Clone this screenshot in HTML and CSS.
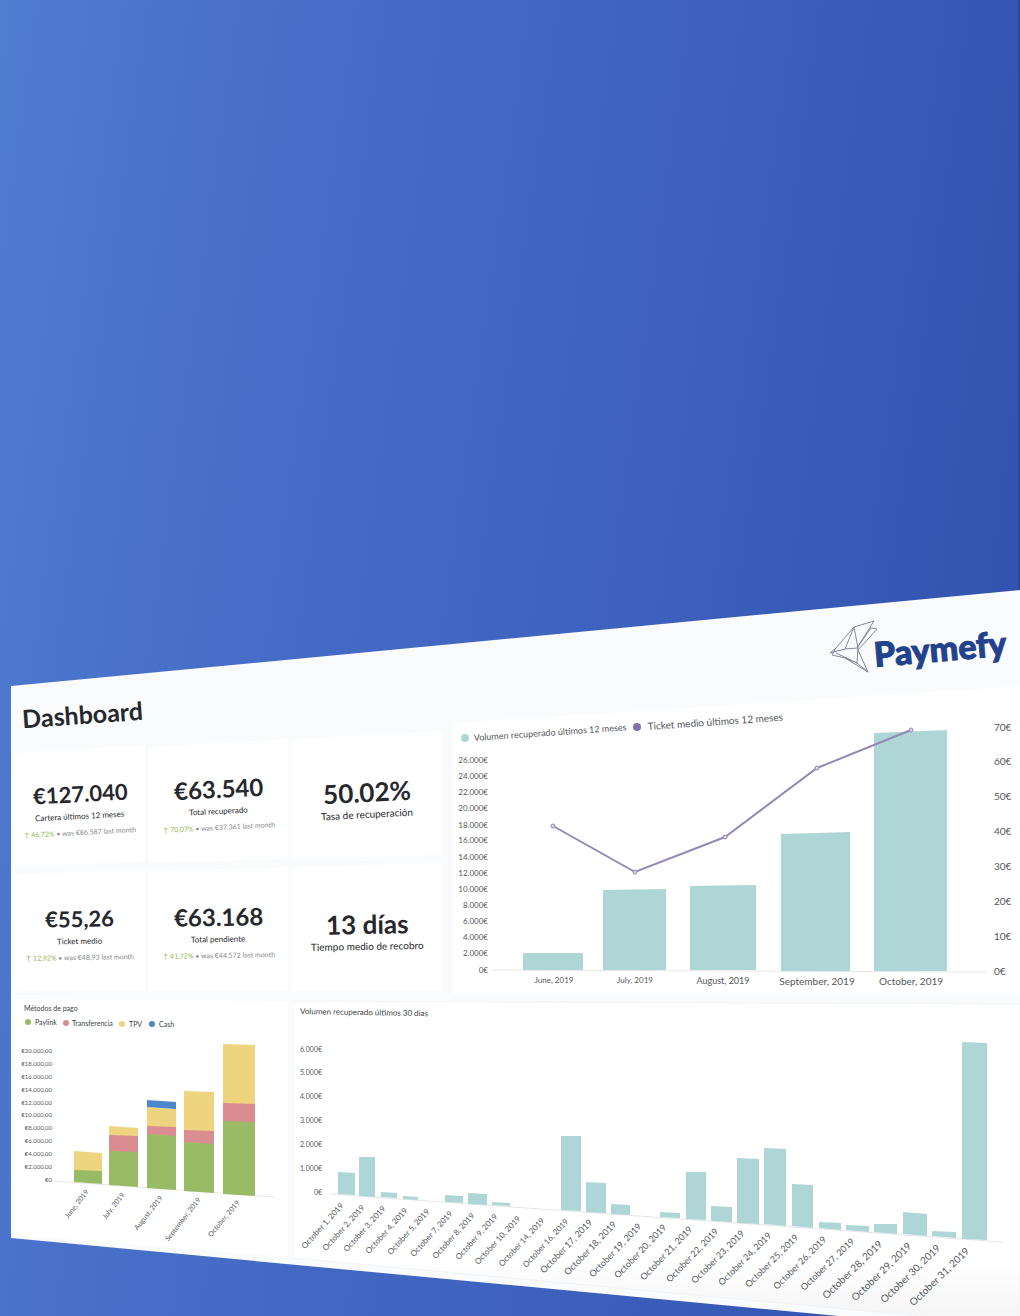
FILE: index.html
```html
<!DOCTYPE html>
<html lang="es">
<head>
<meta charset="utf-8">
<meta name="viewport" content="width=device-width, initial-scale=1">
<title>Paymefy Dashboard</title>
<link rel="stylesheet" href="styles.css">
</head>
<body>
<main class="hero">
  <section class="board">
    <header class="board-header">
      <svg class="logo" viewBox="826 612 188 68" role="img" aria-label="Paymefy">
        <g class="logo-bird">
          <path d="M874 621 L854 627 L836 648 L830 653 L845 649 L858 648 L854 627 L845 649"/>
          <path d="M874 621 L857 648 L871 628 L877 629 L858 650 L868 672 L857 663 L858 648"/>
          <path d="M836 648 L832 655 L845 658 L857 663 L836 653 M845 658 L868 672"/>
        </g>
        <text class="logo-text" transform="translate(875 667) rotate(-5)">Paymefy</text>
      </svg>
    </header>

    <div class="row row-top">
      <div class="summary">
        <h1 class="title">Dashboard</h1>
        <div class="kpis">
          <div class="kpi-col kpi-far">
            <article class="kpi kpi-upper">
              <strong class="kpi-value">€127.040</strong>
              <span class="kpi-label">Cartera últimos 12 meses</span>
              <span class="kpi-trend"><b class="up">↑ 46,72%</b> • was €86.587 last month</span>
            </article>
            <article class="kpi kpi-lower">
              <strong class="kpi-value">€55,26</strong>
              <span class="kpi-label">Ticket medio</span>
              <span class="kpi-trend"><b class="up">↑ 12,92%</b> • was €48,93 last month</span>
            </article>
          </div>
          <div class="kpi-col kpi-mid">
            <article class="kpi kpi-upper">
              <strong class="kpi-value">€63.540</strong>
              <span class="kpi-label">Total recuperado</span>
              <span class="kpi-trend"><b class="up">↑ 70,07%</b> • was €37.361 last month</span>
            </article>
            <article class="kpi kpi-lower">
              <strong class="kpi-value">€63.168</strong>
              <span class="kpi-label">Total pendiente</span>
              <span class="kpi-trend"><b class="up">↑ 41,72%</b> • was €44.572 last month</span>
            </article>
          </div>
          <div class="kpi-col kpi-near">
            <article class="kpi kpi-upper">
              <strong class="kpi-value">50.02%</strong>
              <span class="kpi-label">Tasa de recuperación</span>
            </article>
            <article class="kpi kpi-lower">
              <strong class="kpi-value">13 días</strong>
              <span class="kpi-label">Tiempo medio de recobro</span>
            </article>
          </div>
        </div>
      </div>

      <svg class="chart" viewBox="453 684 567 310" role="img" aria-label="Volumen recuperado y ticket medio, últimos 12 meses">
        <path class="sheet" d="M453 723 L1020 686 V1000 L453 994 Z"/>
        <circle class="teal" cx="465" cy="738" r="4"/>
        <text class="t9" transform="translate(474 741) rotate(-4)">Volumen recuperado últimos 12 meses</text>
        <circle class="purple" cx="637" cy="727" r="4"/>
        <text class="t10" transform="translate(648 730) rotate(-4)">Ticket medio últimos 12 meses</text>
        <g class="t8 end">
          <text x="488" y="763">26.000€</text><text x="488" y="779">24.000€</text>
          <text x="488" y="795">22.000€</text><text x="488" y="811">20.000€</text>
          <text x="488" y="828">18.000€</text><text x="488" y="843">16.000€</text>
          <text x="488" y="860">14.000€</text><text x="488" y="876">12.000€</text>
          <text x="488" y="892">10.000€</text><text x="488" y="908">8.000€</text>
          <text x="488" y="924">6.000€</text><text x="488" y="940">4.000€</text>
          <text x="488" y="956">2.000€</text><text x="488" y="973">0€</text>
        </g>
        <g class="t10">
          <text x="994" y="731">70€</text><text x="994" y="765">60€</text>
          <text x="994" y="800">50€</text><text x="994" y="835">40€</text>
          <text x="994" y="870">30€</text><text x="994" y="905">20€</text>
          <text x="994" y="940">10€</text><text x="994" y="975">0€</text>
        </g>
        <path class="axis" d="M492 970 L987 972"/>
        <g class="teal">
          <path d="M523 953 H583 V970 H523 Z"/>
          <path d="M603 890 L666 889 V970 H603 Z"/>
          <path d="M690 886 L756 885 V970 H690 Z"/>
          <path d="M781 834 L850 832 V971 H781 Z"/>
          <path d="M874 733 L947 730 V971 H874 Z"/>
        </g>
        <path class="trend" d="M553 826 L635 872 L725 837 L817 768 L911 730"/>
        <g class="dot">
          <circle cx="553" cy="826" r="2"/><circle cx="635" cy="872" r="2"/>
          <circle cx="725" cy="837" r="2"/><circle cx="817" cy="768" r="2"/>
          <circle cx="911" cy="730" r="2"/>
        </g>
        <g class="middle">
          <text class="t8" x="554" y="983">June, 2019</text>
          <text class="t8" x="635" y="983">July, 2019</text>
          <text class="t9" x="723" y="984">August, 2019</text>
          <text class="t10" x="817" y="985">September, 2019</text>
          <text class="t10" x="911" y="985">October, 2019</text>
        </g>
      </svg>
    </div>

    <div class="row row-bottom">
      <svg class="chart" viewBox="15 999 273 317" role="img" aria-label="Métodos de pago">
        <path class="sheet" d="M15 999 L288 1001 V1257 L15 1235 Z"/>
        <text class="t7 dark" x="24" y="1011">Métodos de pago</text>
        <circle class="green" cx="28" cy="1022" r="3"/><text class="t7 dark" x="35" y="1025">Paylink</text>
        <circle class="pink" cx="66" cy="1023" r="3"/><text class="t7 dark" x="72" y="1026">Transferencia</text>
        <circle class="yellow" cx="122" cy="1024" r="3"/><text class="t7 dark" x="129" y="1027">TPV</text>
        <circle class="blue" cx="152" cy="1024" r="3"/><text class="t7 dark" x="159" y="1027">Cash</text>
        <g class="t6 end">
          <text x="52" y="1053">€20.000,00</text><text x="52" y="1066">€18.000,00</text>
          <text x="52" y="1079">€16.000,00</text><text x="52" y="1092">€14.000,00</text>
          <text x="52" y="1105">€12.000,00</text><text x="52" y="1117">€10.000,00</text>
          <text x="52" y="1130">€8.000,00</text><text x="52" y="1143">€6.000,00</text>
          <text x="52" y="1156">€4.000,00</text><text x="52" y="1169">€2.000,00</text>
          <text x="52" y="1182">€0</text>
        </g>
        <path class="axis" d="M54 1181 L274 1197"/>
        <g class="yellow">
          <path d="M74 1151 L102 1153 V1172 H74 Z"/>
          <path d="M109 1126 L138 1128 V1138 H109 Z"/>
          <path d="M147 1107 L176 1109 V1129 H147 Z"/>
          <path d="M184 1091 L214 1092 V1133 H184 Z"/>
          <path d="M223 1044 L255 1045 V1105 H223 Z"/>
        </g>
        <path class="blue" d="M147 1100 L176 1102 V1109 L147 1107 Z"/>
        <g class="pink">
          <path d="M109 1135 L138 1136 V1153 H109 Z"/>
          <path d="M147 1126 L176 1127 V1136 H147 Z"/>
          <path d="M184 1130 L214 1131 V1145 H184 Z"/>
          <path d="M223 1103 L255 1104 V1123 H223 Z"/>
        </g>
        <g class="green">
          <path d="M74 1170 L102 1171 V1184 L74 1182 Z"/>
          <path d="M109 1151 L138 1152 V1187 L109 1185 Z"/>
          <path d="M147 1134 L176 1136 V1190 L147 1188 Z"/>
          <path d="M184 1142 L214 1144 V1193 L184 1191 Z"/>
          <path d="M223 1121 L255 1122 V1196 L223 1194 Z"/>
        </g>
        <g class="t7 end">
          <text transform="translate(89 1192) rotate(-52)">June, 2019</text>
          <text transform="translate(125 1195) rotate(-52)">July, 2019</text>
          <text transform="translate(163 1198) rotate(-52)">August, 2019</text>
          <text transform="translate(201 1200) rotate(-52)">September, 2019</text>
          <text transform="translate(240 1203) rotate(-50)">October, 2019</text>
        </g>
      </svg>

      <svg class="chart" viewBox="293 999 727 317" role="img" aria-label="Volumen recuperado últimos 30 días">
        <defs>
          <linearGradient id="fade" x1="0" y1="0" x2="0" y2="1">
            <stop offset="0.8" stop-color="#ffffff"/>
            <stop offset="1" stop-color="#f4f4f5"/>
          </linearGradient>
        </defs>
        <path class="sheet-fade" d="M293 1001 L1020 1004 V1325 L293 1258 Z"/>
        <text class="t8 dark" transform="translate(300 1014) rotate(1)">Volumen recuperado últimos 30 días</text>
        <g class="t7 end">
          <text x="322" y="1052">6.000€</text><text x="322" y="1075">5.000€</text>
          <text x="322" y="1099">4.000€</text><text x="322" y="1123">3.000€</text>
          <text x="322" y="1147">2.000€</text><text x="322" y="1171">1.000€</text>
          <text x="322" y="1195">0€</text>
        </g>
        <path class="axis" d="M330 1194 L1003 1242"/>
        <g class="teal">
          <path d="M338 1172 L355 1173 V1195 L338 1194 Z"/>
          <path d="M359 1157 L375 1157 V1197 L359 1196 Z"/>
          <path d="M381 1192 L397 1193 V1198 L381 1197 Z"/>
          <path d="M403 1196 L418 1197 V1200 L403 1199 Z"/>
          <path d="M445 1195 L463 1196 V1203 L445 1202 Z"/>
          <path d="M468 1193 L487 1194 V1205 L468 1204 Z"/>
          <path d="M492 1202 L510 1203 V1206 L492 1205 Z"/>
          <path d="M561 1136 L581 1136 V1211 L561 1210 Z"/>
          <path d="M586 1182 L606 1183 V1213 L586 1212 Z"/>
          <path d="M611 1204 L630 1205 V1215 L611 1214 Z"/>
          <path d="M660 1212 L680 1213 V1218 L660 1217 Z"/>
          <path d="M686 1172 L706 1172 V1220 L686 1219 Z"/>
          <path d="M711 1206 L732 1207 V1222 L711 1221 Z"/>
          <path d="M737 1158 L759 1159 V1224 L737 1223 Z"/>
          <path d="M764 1148 L786 1149 V1226 L764 1224 Z"/>
          <path d="M792 1184 L813 1185 V1228 L792 1226 Z"/>
          <path d="M819 1222 L841 1223 V1230 L819 1228 Z"/>
          <path d="M846 1225 L869 1226 V1232 L846 1230 Z"/>
          <path d="M874 1224 L897 1224 V1234 L874 1232 Z"/>
          <path d="M903 1212 L927 1214 V1236 L903 1234 Z"/>
          <path d="M932 1231 L956 1232 V1238 L932 1236 Z"/>
          <path d="M962 1042 L987 1043 V1240 L962 1239 Z"/>
        </g>
        <g class="t8 end">
          <text transform="translate(344 1206) rotate(-48)">October 1, 2019</text>
          <text transform="translate(365 1208) rotate(-48)">October 2, 2019</text>
          <text transform="translate(386 1209) rotate(-48)">October 3, 2019</text>
          <text transform="translate(408 1211) rotate(-48)">October 4, 2019</text>
          <text transform="translate(430 1212) rotate(-48)">October 5, 2019</text>
          <text transform="translate(453 1214) rotate(-48)">October 7, 2019</text>
          <text transform="translate(475 1216) rotate(-48)">October 8, 2019</text>
          <text transform="translate(498 1217) rotate(-48)">October 9, 2019</text>
          <text transform="translate(521 1219) rotate(-47)">October 10, 2019</text>
          <text transform="translate(545 1221) rotate(-47)">October 14, 2019</text>
          <text transform="translate(569 1222) rotate(-47)">October 16, 2019</text>
        </g>
        <g class="t9 end">
          <text transform="translate(593 1223) rotate(-46)">October 17, 2019</text>
          <text transform="translate(617 1225) rotate(-46)">October 18, 2019</text>
          <text transform="translate(642 1227) rotate(-46)">October 19, 2019</text>
          <text transform="translate(667 1228) rotate(-46)">October 20, 2019</text>
          <text transform="translate(693 1230) rotate(-46)">October 21, 2019</text>
          <text transform="translate(719 1232) rotate(-46)">October 22, 2019</text>
          <text transform="translate(745 1234) rotate(-45)">October 23, 2019</text>
          <text transform="translate(772 1236) rotate(-45)">October 24, 2019</text>
          <text transform="translate(799 1238) rotate(-45)">October 25, 2019</text>
          <text transform="translate(827 1240) rotate(-45)">October 26, 2019</text>
          <text transform="translate(855 1242) rotate(-44)">October 27, 2019</text>
        </g>
        <g class="t10 end">
          <text transform="translate(883 1245) rotate(-44)">October 28, 2019</text>
          <text transform="translate(912 1247) rotate(-44)">October 29, 2019</text>
          <text transform="translate(941 1249) rotate(-44)">October 30, 2019</text>
          <text transform="translate(970 1252) rotate(-44)">October 31, 2019</text>
        </g>
      </svg>
    </div>
  </section>
</main>
</body>
</html>
```
FILE: styles.css
```css
* {
  box-sizing: border-box;
}

body {
  margin: 0;
  font-family: Lato, "Noto Sans", sans-serif;
  color: #26282c;
}

.hero {
  min-height: 100vh;
  padding: 590px 0 0 11px;
  overflow: hidden;
  background: linear-gradient(98deg, #517dd1 0%, #4870c9 20%, #4065c1 50%, #395bb8 74%, #2e50a9 100%);
  box-shadow: inset -2px 0 0 #2c4a99;
}

.board {
  display: flex;
  flex-direction: column;
  background: #f9fbfd;
  clip-path: polygon(0 96px, 100% 0, 100% 100%, 82% 100%, 0 calc(100% - 78px));
}

.board-header {
  display: flex;
  justify-content: flex-end;
  height: 94px;
  padding: 22px 6px 0 0;
}

.logo {
  width: 188px;
  height: 68px;
}

.logo-bird {
  fill: none;
  stroke: #8088a0;
  stroke-width: 1;
  stroke-linejoin: round;
}

.logo-text {
  font-size: 34px;
  font-weight: 900;
  fill: #22428c;
  stroke: #22428c;
  stroke-width: 1;
}

.row {
  display: grid;
  padding-left: 4px;
}

.row-top {
  grid-template-columns: 427fr 567fr;
  gap: 11px;
}

.row-bottom {
  grid-template-columns: 273fr 727fr;
  gap: 5px;
  margin-top: 5px;
}

.summary {
  display: flex;
  flex-direction: column;
  justify-content: space-between;
}

.title {
  align-self: flex-start;
  margin: 14px 0 0 7px;
  font-size: 25px;
  line-height: 32px;
  font-weight: 700;
  transform: rotate(-4deg);
}

.kpis {
  display: grid;
  grid-template-columns: 130fr 140fr 150fr;
  gap: 4px;
  align-items: end;
  padding-bottom: 3px;
}

.kpi-col {
  display: flex;
  flex-direction: column;
  gap: 4px;
}

.kpi {
  display: flex;
  flex-direction: column;
  align-items: center;
  justify-content: center;
  padding-top: 8px;
  background: #ffffff;
  white-space: nowrap;
}

.kpi-upper {
  clip-path: polygon(0 8px, 100% 0, 100% calc(100% - 4px), 0 100%);
}

.kpi-lower {
  clip-path: polygon(0 4px, 100% 0, 100% 100%, 0 100%);
}

.kpi-upper > * {
  transform: rotate(-3deg);
}

.kpi-lower > * {
  transform: rotate(-1deg);
}

.kpi-far .kpi {
  height: 121px;
}

.kpi-mid .kpi {
  height: 124px;
}

.kpi-near .kpi {
  height: 128px;
}

.kpi-value {
  font-size: 24px;
  line-height: 30px;
  font-weight: 700;
}

.kpi-far .kpi-value {
  font-size: 22px;
}

.kpi-near .kpi-value {
  font-size: 26px;
}

.kpi-label {
  font-size: 8px;
  line-height: 15px;
}

.kpi-near .kpi-label {
  font-size: 10px;
}

.kpi-trend {
  font-size: 7px;
  line-height: 17px;
  color: #85888c;
}

.up {
  font-weight: 400;
  color: #8fb84e;
}

.chart {
  display: block;
  width: 100%;
  height: auto;
}

.chart text {
  fill: #55585c;
}

.chart .dark {
  fill: #3c3f43;
}

.sheet {
  fill: #ffffff;
}

.sheet-fade {
  fill: url(#fade);
  stroke: #f1f2f3;
}

.axis {
  fill: none;
  stroke: #e4e6e8;
}

.trend {
  fill: none;
  stroke: #9488b6;
  stroke-width: 2;
}

.dot {
  fill: #d9d4e6;
  stroke: #9488b6;
}

.teal { fill: #aed6d6; }
.purple { fill: #7f73ac; }
.green { fill: #9abb65; }
.pink { fill: #d98d90; }
.yellow { fill: #eed47f; }
.blue { fill: #4d86cb; }

.t6 { font-size: 6px; }
.t7 { font-size: 7px; }
.t8 { font-size: 8px; }
.t9 { font-size: 9px; }
.t10 { font-size: 10px; }

.end { text-anchor: end; }
.middle { text-anchor: middle; }
```
